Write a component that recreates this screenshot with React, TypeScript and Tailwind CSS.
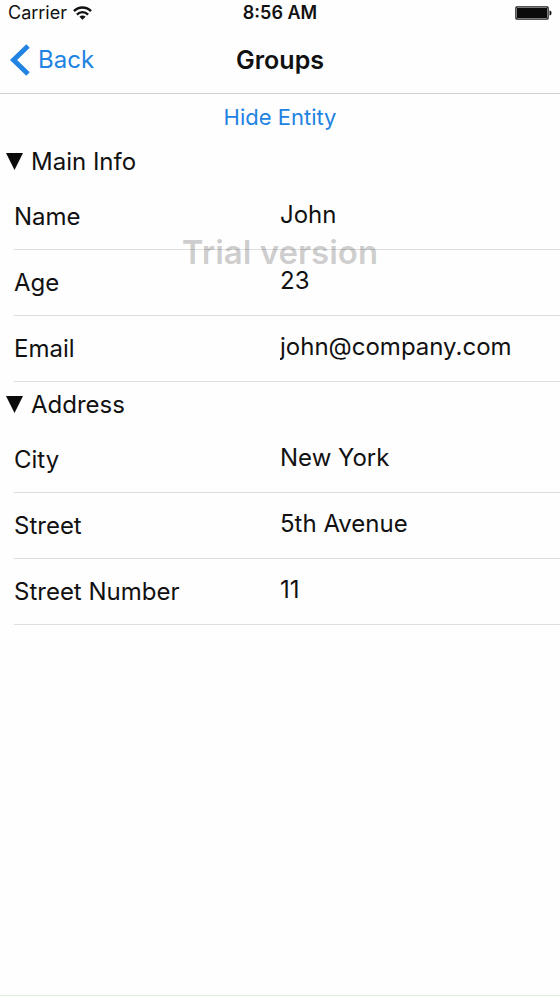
import { useState } from "react";

// Field Type
interface Field {
  name: string;
  label: string;
  type: string;
  value: string;
}
// Group Props
interface Props {
  title: string;
  fields: Field[];
}
// Entity Groups
const GROUPS: Props[] = [
  {
    title: "Main Info",
    fields: [
      { name: "name", label: "Name", type: "text", value: "John" },
      { name: "age", label: "Age", type: "text", value: "23" },
      { name: "email", label: "Email", type: "email", value: "john@company.com" },
    ],
  },
  {
    title: "Address",
    fields: [
      { name: "city", label: "City", type: "text", value: "New York" },
      { name: "street", label: "Street", type: "text", value: "5th Avenue" },
      { name: "number", label: "Street Number", type: "text", value: "11" },
    ],
  },
];

// Status Bar Function
function StatusBar() {
  return (
    <div className="grid h-[26px] grid-cols-3 items-center px-2 text-lg leading-6">
      <div className="flex items-center gap-1.5">
        <span>Carrier</span>
        {/* Wifi Icon */}
        <svg width="19" height="14" viewBox="0 0 19 14" fill="none" aria-hidden="true">
          <path d="M1 5.2C5.8.3 13.2.3 18 5.2" stroke="#111" strokeWidth="2.5" />
          <path d="M3.9 8.6c3.3-3.2 7.9-3.2 11.2 0" stroke="#111" strokeWidth="2.3" />
          <path d="M6.4 10.7c1.8-1.6 4.4-1.6 6.2 0L9.5 13.8z" fill="#111" />
        </svg>
      </div>
      <span className="text-center font-semibold">8:56 AM</span>
      {/* Battery Icon */}
      <svg className="justify-self-end" width="37" height="14" viewBox="0 0 37 14" aria-hidden="true">
        <rect x=".5" y=".5" width="33" height="13" rx="1.5" fill="#111" stroke="#555" />
        <rect x="1.5" y="1.5" width="31" height="11" rx="1" fill="#0b0b0b" stroke="#aaa" strokeWidth=".7" />
        <path d="M34.5 4.5c2.7.2 2.7 4.8 0 5z" fill="#111" />
      </svg>
    </div>
  );
}

// Group Function
function Group({ title, fields }: Props) {
  const [open, SetOpen] = useState<boolean>(true);

  return (
    <section>
      {/* Group Header that Collapses the Fields */}
      <h2>
        <button
          type="button"
          aria-expanded={open}
          onClick={() => SetOpen(!open)}
          className="flex h-[45px] w-full items-center gap-2 pl-1.5 text-left"
        >
          <svg
            width="17"
            height="17"
            viewBox="0 0 17 17"
            aria-hidden="true"
            className={open ? "" : "-rotate-90"}
          >
            <path d="M0 0h17L8.5 17z" fill="#0b0b0b" />
          </svg>
          {title}
        </button>
      </h2>
      {/* Group Fields */}
      {open &&
        fields.map((field) => (
          <div
            key={field.name}
            className="ml-3.5 flex h-[66px] items-center border-b border-[#dedede] pb-1"
          >
            <label htmlFor={field.name} className="w-[266px] shrink-0 pt-1">
              {field.label}
            </label>
            <input
              id={field.name}
              type={field.type}
              defaultValue={field.value}
              className="min-w-0 flex-1 bg-transparent focus:outline-none"
            />
          </div>
        ))}
    </section>
  );
}

// App Main Function
function App() {
  const [visible, SetVisible] = useState<boolean>(true);

  return (
    <div className="flex min-h-screen flex-col border-b border-[#dcefd4] bg-[#fefefe] font-['Inter',sans-serif] text-2xl leading-8 text-[#111]">
      {/* Navigation Header */}
      <header className="border-b border-[#cfcfcf]">
        <StatusBar />
        <nav className="grid h-[67px] grid-cols-3 items-center px-2.5">
          <a href="#back" className="flex items-center gap-2 text-[#2183e2]">
            <svg width="20" height="32" viewBox="0 0 20 32" fill="none" aria-hidden="true">
              <path d="M18 2L3.5 16 18 30" stroke="#2183e2" strokeWidth="5" />
            </svg>
            Back
          </a>
          <h1 className="text-center text-[25px] font-semibold">Groups</h1>
        </nav>
      </header>
      {/* Entity Form */}
      <main className="relative">
        <button
          type="button"
          onClick={() => SetVisible(!visible)}
          className="flex h-[45px] w-full items-center justify-center text-[22px] text-[#2183e2]"
        >
          {visible ? "Hide Entity" : "Show Entity"}
        </button>
        {visible && GROUPS.map((group) => <Group key={group.title} {...group} />)}
        {/* Watermark over the Fields */}
        <p className="pointer-events-none absolute inset-x-0 top-[138px] text-center text-[33px] leading-10 font-semibold text-black/20">
          Trial version
        </p>
      </main>
    </div>
  );
}

export default App;
